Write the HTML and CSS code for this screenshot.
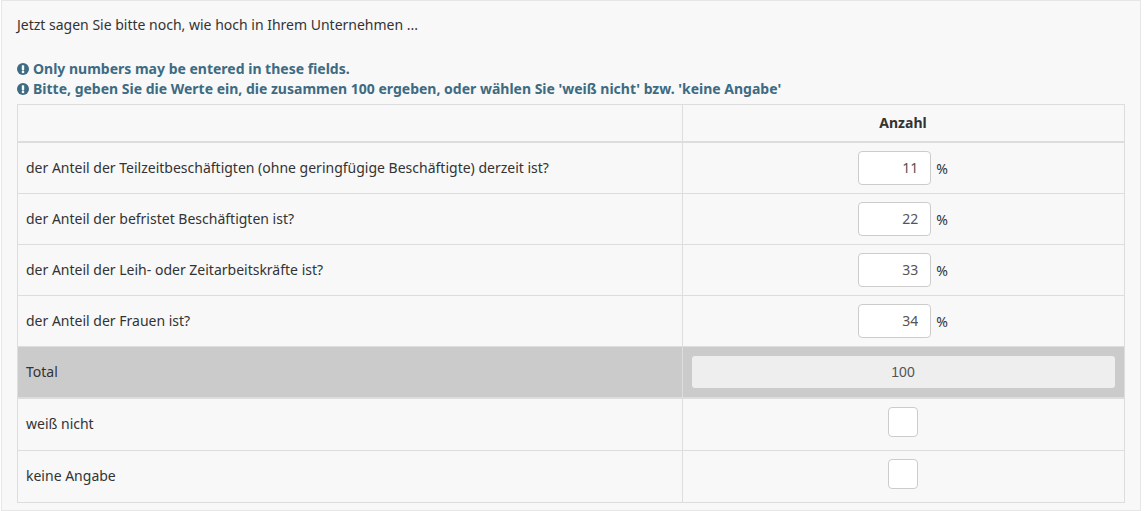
FILE: index.html
```html
<!DOCTYPE html>
<html>
<head>
    <meta charset="utf-8">
    <title>Umfrage</title>
    <link rel="stylesheet" href="styles.css">
</head>
<body>
    <div class="question">
        <p class="question-text">Jetzt sagen Sie bitte noch, wie hoch in Ihrem Unternehmen ...</p>

        <div class="tips">
            <div class="tip">
                <svg class="tip-icon" viewBox="0 0 12 12"><circle cx="6" cy="6" r="6" fill="#3d6b82"/><rect x="4.8" y="2.2" width="2.4" height="5" rx="0.6" fill="#f8f8f8"/><circle cx="6" cy="8.9" r="1.3" fill="#f8f8f8"/></svg>
                Only numbers may be entered in these fields.
            </div>
            <div class="tip">
                <svg class="tip-icon" viewBox="0 0 12 12"><circle cx="6" cy="6" r="6" fill="#3d6b82"/><rect x="4.8" y="2.2" width="2.4" height="5" rx="0.6" fill="#f8f8f8"/><circle cx="6" cy="8.9" r="1.3" fill="#f8f8f8"/></svg>
                Bitte, geben Sie die Werte ein, die zusammen 100 ergeben, oder wählen Sie 'weiß nicht' bzw. 'keine Angabe'
            </div>
        </div>

        <table class="answers">
            <colgroup>
                <col class="col-label">
                <col>
            </colgroup>
            <thead>
                <tr>
                    <th></th>
                    <th>Anzahl</th>
                </tr>
            </thead>
            <tbody>
                <tr class="row-number">
                    <td>der Anteil der Teilzeitbeschäftigten (ohne geringfügige Beschäftigte) derzeit ist?</td>
                    <td class="cell-input"><input class="number-input" type="text" value="11"><span class="unit">%</span></td>
                </tr>
                <tr class="row-number">
                    <td>der Anteil der befristet Beschäftigten ist?</td>
                    <td class="cell-input"><input class="number-input" type="text" value="22"><span class="unit">%</span></td>
                </tr>
                <tr class="row-number">
                    <td>der Anteil der Leih- oder Zeitarbeitskräfte ist?</td>
                    <td class="cell-input"><input class="number-input" type="text" value="33"><span class="unit">%</span></td>
                </tr>
                <tr class="row-number">
                    <td>der Anteil der Frauen ist?</td>
                    <td class="cell-input"><input class="number-input" type="text" value="34"><span class="unit">%</span></td>
                </tr>
                <tr class="row-total">
                    <td>Total</td>
                    <td class="cell-total"><div class="total-value">100</div></td>
                </tr>
                <tr class="row-check">
                    <td>weiß nicht</td>
                    <td class="cell-check"><span class="checkbox"></span></td>
                </tr>
                <tr class="row-check">
                    <td>keine Angabe</td>
                    <td class="cell-check"><span class="checkbox"></span></td>
                </tr>
            </tbody>
        </table>
    </div>
</body>
</html>
```

FILE: styles.css
```css
body {
    font-family: "Noto Sans", "Open Sans", sans-serif;
    font-size: 14px;
    margin: 0;
    background: white;
    color: #333;
}

.question {
    width: 1140px;
    height: 511px;
    box-sizing: border-box;
    margin-left: 1px;
    padding: 14px 15px 0 14px;
    background: #f8f8f8;
    border: 1px solid #e6e6e6;
}

.question-text {
    margin: 0 0 0 1px;
    height: 20px;
    line-height: 19px;
}

.tips {
    margin: 24px 0 5px 1px;
    color: #3d6b82;
    font-weight: bold;
    line-height: 20px;
}

.tip {
    display: flex;
    align-items: center;
    gap: 4px;
    height: 20px;
}

.tip-icon {
    width: 12px;
    height: 12px;
    flex: none;
}

.answers {
    width: 1108px;
    margin-left: 1px;
    border-collapse: collapse;
    table-layout: fixed;
}

.col-label {
    width: 665px;
}

.answers th,
.answers td {
    border: 1px solid #ddd;
    padding: 8px;
}

.answers th {
    height: 37px;
    box-sizing: border-box;
    border-bottom-width: 2px;
    padding-right: 9px;
    text-align: center;
    font-weight: bold;
}

.row-number td {
    height: 50px;
    box-sizing: border-box;
}

.cell-input {
    text-align: center;
    white-space: nowrap;
}

.number-input {
    width: 73px;
    height: 34px;
    box-sizing: border-box;
    padding: 6px 12px;
    border: 1px solid #ccc;
    border-radius: 4px;
    background: white;
    color: #555;
    font-family: inherit;
    font-size: 14px;
    text-align: right;
    vertical-align: middle;
}

.unit {
    display: inline-block;
    margin-left: 5px;
    padding-top: 2px;
    padding-right: 1px;
    vertical-align: middle;
}

.row-total td {
    height: 52px;
    box-sizing: border-box;
    background: #cbcbcb;
    border-bottom-width: 2px;
}

.answers .cell-total {
    padding: 8px 9px;
}

.total-value {
    height: 32px;
    padding-right: 1px;
    line-height: 32px;
    border-radius: 3px;
    background: #eee;
    color: #555;
    font-family: "Liberation Sans", Arial, sans-serif;
    text-align: center;
}

.row-check td {
    height: 52px;
    box-sizing: border-box;
    padding: 7px 8px 9px;
}

.answers .cell-check {
    padding: 6px 8px 10px;
    text-align: center;
}

.checkbox {
    display: inline-block;
    width: 30px;
    height: 30px;
    box-sizing: border-box;
    margin-right: 1px;
    border: 1px solid #ccc;
    border-radius: 4px;
    background: white;
    vertical-align: middle;
}
```
